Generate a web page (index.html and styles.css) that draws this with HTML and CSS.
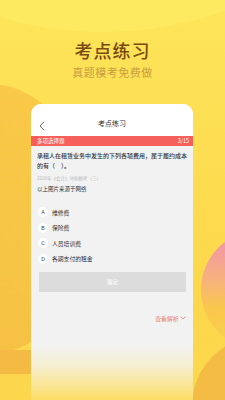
FILE: index.html
```html
<!DOCTYPE html>
<html lang="zh">
<head>
<meta charset="utf-8">
<link rel="stylesheet" href="styles.css">
</head>
<body>
<div class="bg">
  <div class="wave"></div>
  <div class="blob-left"></div>
  <div class="blob-left-low"></div>
  <div class="blob-right"></div>
  <div class="blob-right-pink"></div>
</div>
<div class="page">
  <div class="hero">
    <div class="hero-title">考点练习</div>
    <div class="hero-sub">真题模考免费做</div>
  </div>
  <div class="phone">
    <div class="nav">
      <svg class="back" width="6" height="10" viewBox="0 0 6 10"><path d="M5 0.8 L1 5 L5 9.2" fill="none" stroke="#555" stroke-width="0.9"/></svg>
      <span class="nav-title">考点练习</span>
    </div>
    <div class="bar">
      <span>多项选择题</span>
      <span>3/15</span>
    </div>
    <div class="content">
      <div class="question">承租人在租赁业务中发生的下列各项费用，属于履约成本的有（　）。</div>
      <div class="source">2020年《会计》冲刺模考（三）</div>
      <div class="note">以上图片来源于网络</div>
      <div class="options">
        <div class="opt"><span class="letter">A</span><span>维修费</span></div>
        <div class="opt"><span class="letter">B</span><span>保险费</span></div>
        <div class="opt"><span class="letter">C</span><span>人员培训费</span></div>
        <div class="opt"><span class="letter">D</span><span>各期支付的租金</span></div>
      </div>
      <div class="btn">确定</div>
      <div class="analysis">查看解析<svg width="6" height="4" viewBox="0 0 6 4"><path d="M0.6 0.6 L3 3 L5.4 0.6" fill="none" stroke="#ea7a6c" stroke-width="0.8"/></svg></div>
    </div>
  </div>
</div>
</body>
</html>
```

FILE: styles.css
```css
html, body {
  margin: 0;
  padding: 0;
}
body {
  width: 225px;
  height: 400px;
  overflow: hidden;
  position: relative;
  font-family: "Noto Sans CJK SC", "Noto Sans", sans-serif;
  background: linear-gradient(180deg, #fde55a 0%, #fdd94d 60%, #fcd64c 100%);
}
.bg {
  position: absolute;
  inset: 0;
  overflow: hidden;
}
.wave {
  position: absolute;
  left: -120px;
  top: -300px;
  width: 500px;
  height: 330px;
  border-radius: 50%;
  background: #feea60;
  transform: rotate(-8deg);
}
.blob-left {
  position: absolute;
  left: -110px;
  top: 84px;
  width: 200px;
  height: 270px;
  border-radius: 50%;
  background: linear-gradient(200deg, #f9c948 0%, #f7c545 60%, #f5be43 100%);
}
.blob-left-low {
  position: absolute;
  left: -40px;
  top: 350px;
  width: 100px;
  height: 24px;
  background: #f4ba43;
}
.blob-right {
  position: absolute;
  left: 192px;
  top: 336px;
  width: 140px;
  height: 140px;
  border-radius: 50%;
  background: #f4bc44;
}
.blob-right-pink {
  position: absolute;
  left: 201px;
  top: 230px;
  width: 120px;
  height: 120px;
  border-radius: 50%;
  background: linear-gradient(180deg, #f49aa0 15%, #f7b577 45%, #f9c74c 65%, #fbd14c 100%);
}
.page {
  position: relative;
}
.hero {
  padding-top: 39px;
  text-align: center;
}
.hero-title {
  font-size: 18px;
  line-height: 22px;
  color: #7b4a12;
  letter-spacing: 1px;
  font-weight: 500;
}
.hero-sub {
  margin-top: 3px;
  font-size: 11px;
  line-height: 16px;
  color: #c99d42;
  letter-spacing: 0.5px;
}
.phone {
  margin: 24px 32px 0 31px;
  height: 296px;
  border-radius: 10px 10px 0 0;
  overflow: hidden;
  background: linear-gradient(180deg, #f2f2f2 0px, #f2f2f2 242px, #f6efd0 262px, #fae38a 285px, #fbdd62 296px);
  display: flex;
  flex-direction: column;
}
.nav {
  height: 32px;
  background: #fff;
  display: flex;
  align-items: center;
  justify-content: center;
  position: relative;
}
.back {
  position: absolute;
  left: 8px;
  top: 17px;
}
.nav-title {
  font-size: 7px;
  color: #333;
  margin-top: 6px;
}
.bar {
  height: 10px;
  background: #f6605a;
  color: #fff;
  font-size: 5.5px;
  line-height: 10px;
  display: flex;
  justify-content: space-between;
  padding: 0 4px 0 6px;
}
.content {
  padding: 5px 4px 0 6px;
  display: flex;
  flex-direction: column;
}
.question {
  font-size: 6px;
  line-height: 10px;
  color: #333;
  font-weight: 500;
}
.source {
  margin-top: 4px;
  font-size: 4.5px;
  line-height: 6px;
  color: #b8b8b8;
}
.note {
  margin-top: 4px;
  font-size: 5.5px;
  line-height: 8px;
  color: #333;
}
.options {
  margin-top: 14px;
  display: flex;
  flex-direction: column;
  gap: 5.6px;
}
.opt {
  display: flex;
  align-items: center;
  gap: 4px;
  font-size: 5.8px;
  color: #333;
  height: 10px;
  padding-left: 1px;
}
.letter {
  width: 10px;
  height: 10px;
  border-radius: 50%;
  background: #fff;
  display: flex;
  align-items: center;
  justify-content: center;
  font-family: "Roboto", sans-serif;
  font-size: 5.5px;
  color: #444;
}
.btn {
  margin: 8px 3px 0 2px;
  height: 20px;
  background: #dcdcdc;
  color: #fff;
  font-size: 5.5px;
  display: flex;
  align-items: center;
  justify-content: center;
}
.analysis {
  margin-top: 22px;
  margin-right: 3px;
  align-self: flex-end;
  font-size: 5.8px;
  color: #ea7a6c;
  display: flex;
  align-items: center;
  gap: 1.5px;
}
```
